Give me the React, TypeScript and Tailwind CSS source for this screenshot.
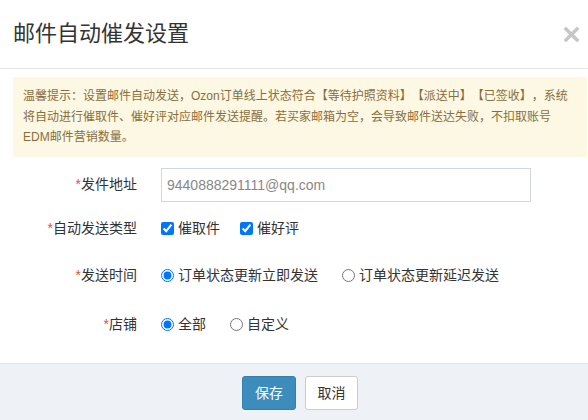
import React from 'react';

const font = { fontFamily: '"Liberation Sans", "Noto Sans CJK SC", sans-serif' };

const Label: React.FC<{ text: string }> = ({ text }) => (
  <div className="w-[124px] shrink-0 text-right text-[14px] text-[#333]">
    <span className="text-[#e74c3c]">*</span>
    {text}
  </div>
);

export default function App() {
  return (
    <div className="w-[588px] h-[420px] overflow-hidden bg-white" style={font}>
      <div className="w-[600px] h-[420px] flex flex-col">
        {/* header */}
        <div className="h-[69px] shrink-0 flex items-center justify-between pl-[13px] pr-[21px] border-b border-[#e5e5e5]">
          <h4 className="text-[22px] text-[#333] leading-none">邮件自动催发设置</h4>
          <button className="w-[15px] h-[15px] flex items-center justify-center">
            <svg width="15" height="15" viewBox="0 0 15 15">
              <path d="M2 2 L13 13 M13 2 L2 13" stroke="#c6c6c6" strokeWidth="3.4" strokeLinecap="square" />
            </svg>
          </button>
        </div>

        {/* body */}
        <div className="flex-1 px-[13px] pt-[8px]">
          <div className="bg-[#fcf8e3] text-[#8a6d3b] text-[12px] leading-[20.5px] pl-[10px] pr-[8px] py-[9px] whitespace-nowrap [text-spacing-trim:space-all]">
            温馨提示：设置邮件自动发送，Ozon订单线上状态符合【等待护照资料】【派送中】【已签收】，系统
            <br />
            将自动进行催取件、催好评对应邮件发送提醒。若买家邮箱为空，会导致邮件送达失败，不扣取账号
            <br />
            EDM邮件营销数量。
          </div>

          <div className="flex items-center h-[34px] mt-[11px]">
            <Label text="发件地址" />
            <input
              type="text"
              defaultValue="9440888291111@qq.com"
              className="ml-[24px] w-[370px] h-[34px] border border-[#d2d6de] px-[5px] text-[14px] text-[#888] outline-none"
            />
          </div>

          <div className="flex items-center h-[34px] mt-[10px]">
            <Label text="自动发送类型" />
            <div className="ml-[24px] flex items-center text-[14px] text-[#333]">
              <label className="flex items-center gap-[4px]">
                <input type="checkbox" defaultChecked className="m-0 w-[13px] h-[13px]" />
                催取件
              </label>
              <label className="flex items-center gap-[4px] ml-[20px]">
                <input type="checkbox" defaultChecked className="m-0 w-[13px] h-[13px]" />
                催好评
              </label>
            </div>
          </div>

          <div className="flex items-center h-[34px] mt-[13px]">
            <Label text="发送时间" />
            <div className="ml-[24px] flex items-center text-[14px] text-[#333]">
              <label className="flex items-center gap-[4px]">
                <input type="radio" name="time" defaultChecked className="m-0 w-[13px] h-[13px]" />
                订单状态更新立即发送
              </label>
              <label className="flex items-center gap-[4px] ml-[24px]">
                <input type="radio" name="time" className="m-0 w-[13px] h-[13px]" />
                订单状态更新延迟发送
              </label>
            </div>
          </div>

          <div className="flex items-center h-[34px] mt-[15px]">
            <Label text="店铺" />
            <div className="ml-[24px] flex items-center text-[14px] text-[#333]">
              <label className="flex items-center gap-[4px]">
                <input type="radio" name="shop" defaultChecked className="m-0 w-[13px] h-[13px]" />
                全部
              </label>
              <label className="flex items-center gap-[4px] ml-[24px]">
                <input type="radio" name="shop" className="m-0 w-[13px] h-[13px]" />
                自定义
              </label>
            </div>
          </div>
        </div>

        {/* footer */}
        <div className="h-[57px] shrink-0 border-t border-[#e5e5e5] bg-[#eef1f6] flex justify-center pt-[12px] gap-[9px]">
          <button className="w-[54px] h-[34px] rounded-[3px] bg-[#3c8dbc] border border-[#367fa9] text-white text-[14px]">
            保存
          </button>
          <button className="w-[53px] h-[34px] rounded-[3px] bg-white border border-[#ccc] text-[#333] text-[14px]">
            取消
          </button>
        </div>
      </div>
    </div>
  );
}
